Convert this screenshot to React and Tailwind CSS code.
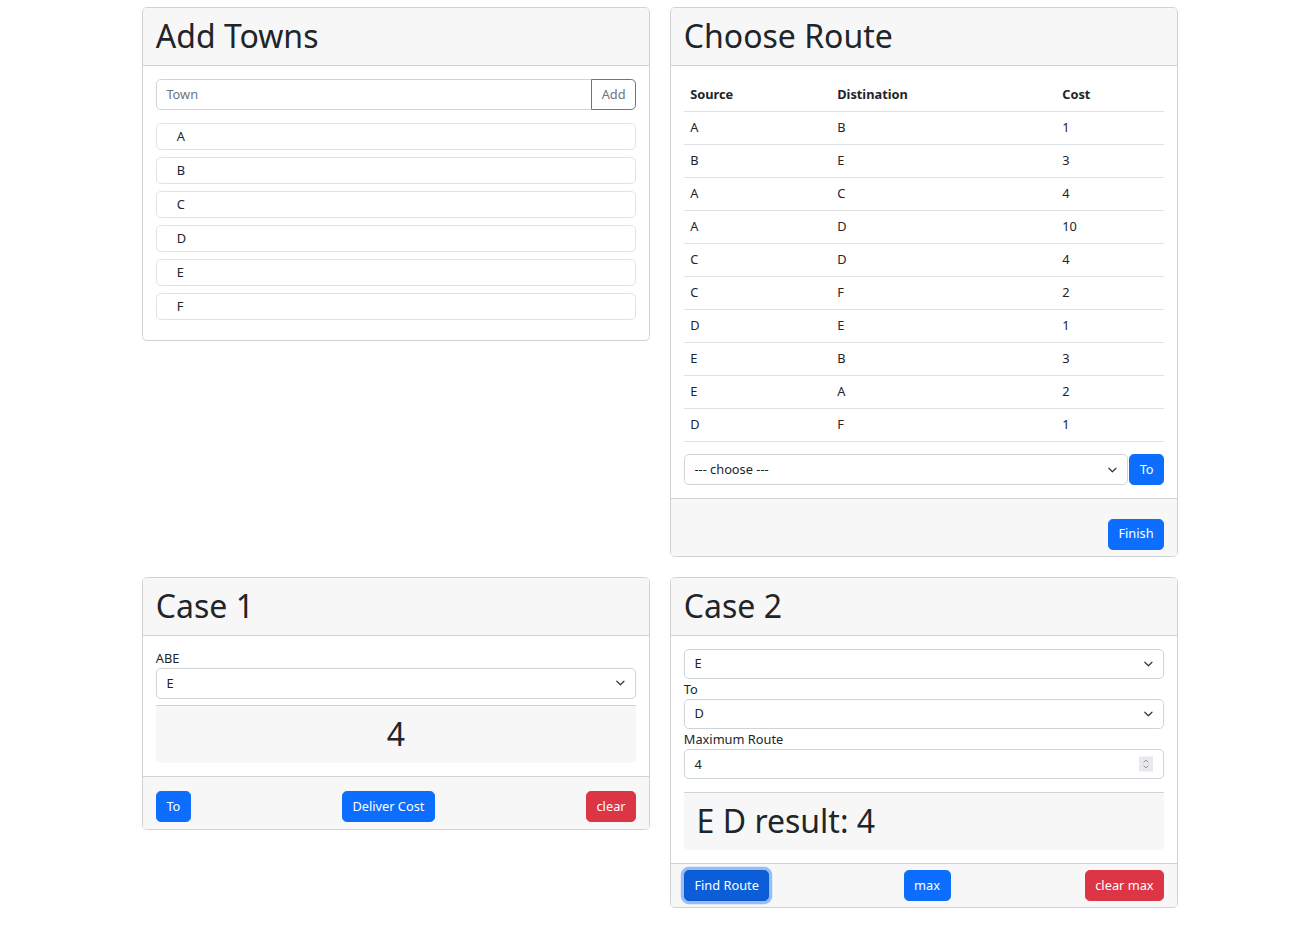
import React from "react";

const towns = ["A", "B", "C", "D", "E", "F"];
const routes = [
  ["A", "B", 1],
  ["B", "E", 3],
  ["A", "C", 4],
  ["A", "D", 10],
  ["C", "D", 4],
  ["C", "F", 2],
  ["D", "E", 1],
  ["E", "B", 3],
  ["E", "A", 2],
  ["D", "F", 1],
];

const Chevron = () => (
  <svg
    className="pointer-events-none absolute right-[9.6px] top-1/2 -translate-y-1/2 w-[12.8px] h-[9.6px]"
    viewBox="0 0 16 16"
    fill="none"
    stroke="#343a40"
    strokeWidth="2"
    strokeLinecap="round"
    strokeLinejoin="round"
  >
    <path d="m2 5 6 6 6-6" />
  </svg>
);

const Select = ({ value, className = "", h = "h-[31px]" }) => (
  <div className={"relative " + className}>
    <select
      defaultValue={value}
      className={
        "appearance-none w-full border border-[#ced4da] rounded-[4.8px] bg-white pl-[9.6px] pr-[30px] text-[12.8px] text-[#212529] outline-none " +
        h
      }
    >
      <option>{value}</option>
    </select>
    <Chevron />
  </div>
);

const Btn = ({ children, variant = "primary", className = "" }) => {
  const styles = {
    primary: "bg-[#0d6efd] border-[#0d6efd] text-white",
    danger: "bg-[#dc3545] border-[#dc3545] text-white",
    focus:
      "bg-[#0b5ed7] border-[#0a58ca] text-white shadow-[0_0_0_3.2px_rgba(49,132,253,0.5)]",
    outline: "bg-white border-[#6c757d] text-[#6c757d]",
  };
  return (
    <button
      className={
        "border h-[31px] px-[9.6px] text-[12.8px] leading-[19.2px] rounded-[4.8px] " +
        styles[variant] +
        " " +
        className
      }
    >
      {children}
    </button>
  );
};

// big text line used in headers and result boxes (glyphs nudged down for Noto Sans)
const Big = ({ children, className = "" }) => (
  <h1 className={"text-[32px] leading-[38.4px] pt-[2.6px] mb-[3.4px] text-[#212529] " + className}>
    {children}
  </h1>
);

const Card = ({ title, children, footer }) => (
  <div className="border border-[#d2d2d2] rounded-[4.8px] bg-white overflow-hidden">
    <div className="bg-[#f7f7f7] border-b border-[#d2d2d2] px-[12.8px] pt-[6.2px] pb-[6.4px]">
      <Big>{title}</Big>
    </div>
    <div className="p-[12.8px]">{children}</div>
    {footer && (
      <div className="bg-[#f7f7f7] border-t border-[#d2d2d2] px-[12.8px] py-[6.4px]">
        {footer}
      </div>
    )}
  </div>
);

export default function App() {
  return (
    <div className="min-h-[931px] bg-white pt-[7px] font-['Noto_Sans',sans-serif] text-[12.8px] text-[#212529]">
      <div className="ml-[142px] w-[1036px] grid grid-cols-2 gap-x-5 gap-y-5 items-start">
        <Card title="Add Towns">
          <div className="flex h-[31px]">
            <input
              placeholder="Town"
              className="flex-1 min-w-0 border border-[#ced4da] rounded-l-[4.8px] px-[9.6px] text-[12.8px] outline-none placeholder:text-[#6c757d]"
            />
            <Btn variant="outline" className="rounded-l-none -ml-px">
              Add
            </Btn>
          </div>
          <ul className="mt-[13px] mb-[7px] flex flex-col gap-[7px]">
            {towns.map((t) => (
              <li
                key={t}
                className="h-[27px] flex items-center border border-[#dee2e6] rounded-[4.8px] pl-[20px]"
              >
                {t}
              </li>
            ))}
          </ul>
        </Card>

        <Card
          title="Choose Route"
          footer={
            <div className="flex justify-end mt-[13px]">
              <Btn>Finish</Btn>
            </div>
          }
        >
          <table className="w-full mb-[12.8px] border-collapse">
            <thead>
              <tr className="border-b border-[#dee2e6]">
                <th className="w-[147px] text-left font-bold px-[6.4px] py-[6.4px] leading-[19.2px]">Source</th>
                <th className="w-[225px] text-left font-bold px-[6.4px] py-[6.4px] leading-[19.2px]">Distination</th>
                <th className="text-left font-bold px-[6.4px] py-[6.4px] leading-[19.2px]">Cost</th>
              </tr>
            </thead>
            <tbody>
              {routes.map(([s, d, c], i) => (
                <tr key={i} className="border-b border-[#dee2e6]">
                  <td className="px-[6.4px] py-[6.4px] leading-[19.2px]">{s}</td>
                  <td className="px-[6.4px] py-[6.4px] leading-[19.2px]">{d}</td>
                  <td className="px-[6.4px] py-[6.4px] leading-[19.2px]">{c}</td>
                </tr>
              ))}
            </tbody>
          </table>
          <div className="flex gap-px">
            <Select value="--- choose ---" className="flex-1" />
            <Btn>To</Btn>
          </div>
        </Card>

        <Card
          title="Case 1"
          footer={
            <div className="flex justify-between mt-[8px]">
              <Btn>To</Btn>
              <Btn>Deliver Cost</Btn>
              <Btn variant="danger">clear</Btn>
            </div>
          }
        >
          <label className="block leading-[19.2px]">ABE</label>
          <Select value="E" />
          <div className="mt-[6px] bg-[#f7f7f7] border-t border-[#d2d2d2] rounded-b-[4.8px] px-[12.8px] pt-[6.4px] pb-[6.4px]">
            <Big className="text-center">4</Big>
          </div>
        </Card>

        <Card
          title="Case 2"
          footer={
            <div className="flex justify-between">
              <Btn variant="focus">Find Route</Btn>
              <Btn>max</Btn>
              <Btn variant="danger">clear max</Btn>
            </div>
          }
        >
          <Select value="E" h="h-[30px]" />
          <label className="block leading-[20px]">To</label>
          <Select value="D" h="h-[30px]" />
          <label className="block leading-[20px]">Maximum Route</label>
          <div className="relative">
            <input
              type="number"
              defaultValue={4}
              className="w-full h-[30px] border border-[#ced4da] rounded-[4.8px] px-[9.6px] text-[12.8px] outline-none [appearance:textfield] [&::-webkit-inner-spin-button]:appearance-none"
            />
            <span className="pointer-events-none absolute right-[11px] top-1/2 -translate-y-1/2 w-[14px] h-[15px] bg-[#e9e9ed] flex items-center justify-center">
              <svg viewBox="0 0 10 14" className="w-[8px] h-[11px]" fill="none" stroke="#8a8a8a" strokeWidth="1.2">
                <path d="M2 5 5 2 8 5M2 9l3 3 3-3" />
              </svg>
            </span>
          </div>
          <div className="mt-[13px] bg-[#f7f7f7] border-t border-[#d2d2d2] rounded-b-[4.8px] px-[12.8px] pt-[6.4px] pb-[6.4px]">
            <Big>E D result: 4</Big>
          </div>
        </Card>
      </div>
    </div>
  );
}
